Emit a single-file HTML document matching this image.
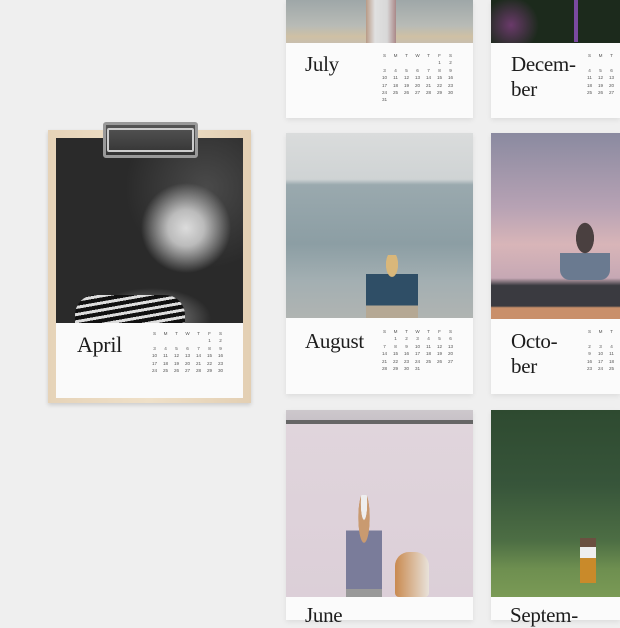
<!DOCTYPE html>
<html><head><style>
*{margin:0;padding:0;box-sizing:border-box}
body{width:620px;height:620px;background:#efefef;position:relative;overflow:hidden;font-family:"Liberation Serif",serif}
.a{position:absolute}
.card{position:absolute;background:#fbfbfb;box-shadow:0 2px 5px rgba(0,0,0,.08)}
.t{position:absolute;font-family:"Liberation Serif",serif;color:#1d1d1d;font-size:21px;line-height:25px;letter-spacing:-.3px}
.g{position:absolute;display:grid;grid-template-columns:repeat(7,11px);grid-auto-rows:7.4px;font-family:"Liberation Sans",sans-serif;font-size:4.6px;color:#555;text-align:center;line-height:7.4px}
</style></head><body>

<!-- clipboard -->
<div class="a" style="left:48px;top:130px;width:203px;height:273px;background:linear-gradient(90deg,#e6d3b8,#efe0c8 50%,#e3cfb3);box-shadow:0 2px 4px rgba(0,0,0,.15)"></div>
<div class="a" style="left:56px;top:138px;width:187px;height:185px;background:radial-gradient(ellipse 45px 45px at 130px 90px,#dcdcdc 0,#bbb 40%,rgba(40,40,40,0) 100%),radial-gradient(ellipse 60px 30px at 95px 180px,#9a9a9a,rgba(0,0,0,0) 100%),radial-gradient(circle at 150px 50px,#4a4a4a,rgba(0,0,0,0) 40%),#2a2a2a"></div>
<div class="a" style="left:75px;top:295px;width:110px;height:28px;background:repeating-linear-gradient(170deg,#111 0 4px,#ddd 4px 7px);border-radius:20px 20px 0 0"></div>
<div class="a" style="left:103px;top:122px;width:95px;height:36px;border:3px solid #999;border-radius:3px;background:linear-gradient(#555,#333)"></div>
<div class="a" style="left:107px;top:128px;width:87px;height:24px;border:2px solid #ccc;border-radius:2px"></div>
<div class="a" style="left:56px;top:323px;width:187px;height:75px;background:#fafafa"></div>
<div class="t" style="left:77px;top:332px;font-size:22px">April</div>
<div class="g" style="left:149px;top:330px"><span>S</span><span>M</span><span>T</span><span>W</span><span>T</span><span>F</span><span>S</span><span></span><span></span><span></span><span></span><span></span><span>1</span><span>2</span><span>3</span><span>4</span><span>5</span><span>6</span><span>7</span><span>8</span><span>9</span><span>10</span><span>11</span><span>12</span><span>13</span><span>14</span><span>15</span><span>16</span><span>17</span><span>18</span><span>19</span><span>20</span><span>21</span><span>22</span><span>23</span><span>24</span><span>25</span><span>26</span><span>27</span><span>28</span><span>29</span><span>30</span></div>

<!-- July -->
<div class="card" style="left:286px;top:0;width:187px;height:118px"></div>
<div class="a" style="left:286px;top:0;width:187px;height:43px;background:linear-gradient(#9ea7a8,#b8bbb6 60%,#cfc0a4 85%,#c9bfae)"></div>
<div class="a" style="left:366px;top:0;width:30px;height:43px;background:linear-gradient(90deg,#b89a86,#e0e0e0 30%,#d8d8d8 70%,#a88)"></div>
<div class="t" style="left:305px;top:52px">July</div>
<div class="g" style="left:379px;top:52px"><span>S</span><span>M</span><span>T</span><span>W</span><span>T</span><span>F</span><span>S</span><span></span><span></span><span></span><span></span><span></span><span>1</span><span>2</span><span>3</span><span>4</span><span>5</span><span>6</span><span>7</span><span>8</span><span>9</span><span>10</span><span>11</span><span>12</span><span>13</span><span>14</span><span>15</span><span>16</span><span>17</span><span>18</span><span>19</span><span>20</span><span>21</span><span>22</span><span>23</span><span>24</span><span>25</span><span>26</span><span>27</span><span>28</span><span>29</span><span>30</span><span>31</span></div>

<!-- December -->
<div class="card" style="left:491px;top:0;width:129px;height:118px"></div>
<div class="a" style="left:491px;top:0;width:129px;height:43px;background:radial-gradient(circle at 20px 25px,#6a3a6a,rgba(0,0,0,0) 25%),#1c2a1c"></div>
<div class="a" style="left:574px;top:0;width:4px;height:42px;background:#7a4aa0"></div>
<div class="t" style="left:511px;top:52px">Decem-<br>ber</div>
<div class="g" style="left:584px;top:52px;grid-template-columns:repeat(3,11px)"><span>S</span><span>M</span><span>T</span><span></span><span></span><span></span><span>4</span><span>5</span><span>6</span><span>11</span><span>12</span><span>13</span><span>18</span><span>19</span><span>20</span><span>25</span><span>26</span><span>27</span></div>

<!-- August -->
<div class="card" style="left:286px;top:133px;width:187px;height:261px"></div>
<div class="a" style="left:286px;top:133px;width:187px;height:185px;background:linear-gradient(#dadcdc,#cfd3d4 25%,#9aa9ae 28%,#8c9ea4 60%,#a3afb2 80%,#b0b4b2)"></div>
<div class="a" style="left:366px;top:255px;width:52px;height:63px;background:radial-gradient(ellipse at 50% 15%,#d9b77a 0,#d9b77a 16%,rgba(0,0,0,0) 17%),linear-gradient(rgba(0,0,0,0) 30%,#2f4e66 30%,#2f4e66 80%,#b5a894 80%);border-radius:10px 10px 0 0"></div>
<div class="t" style="left:305px;top:329px">August</div>
<div class="g" style="left:379px;top:328px"><span>S</span><span>M</span><span>T</span><span>W</span><span>T</span><span>F</span><span>S</span><span></span><span>1</span><span>2</span><span>3</span><span>4</span><span>5</span><span>6</span><span>7</span><span>8</span><span>9</span><span>10</span><span>11</span><span>12</span><span>13</span><span>14</span><span>15</span><span>16</span><span>17</span><span>18</span><span>19</span><span>20</span><span>21</span><span>22</span><span>23</span><span>24</span><span>25</span><span>26</span><span>27</span><span>28</span><span>29</span><span>30</span><span>31</span></div>

<!-- October -->
<div class="card" style="left:491px;top:133px;width:129px;height:261px"></div>
<div class="a" style="left:491px;top:133px;width:129px;height:186px;background:linear-gradient(#8a8aa0,#b7a2b4 40%,#d8b5b8 60%,#c6a8b4 78%,#3a3a40 82%,#3a3a40 93%,#c98f6a 94%)"></div>
<div class="a" style="left:560px;top:220px;width:50px;height:60px;background:radial-gradient(ellipse at 50% 30%,#4a4040 0,#4a4040 25%,rgba(0,0,0,0) 26%),linear-gradient(rgba(0,0,0,0) 55%,#6a7a90 55%);border-radius:10px"></div>
<div class="t" style="left:511px;top:329px">Octo-<br>ber</div>
<div class="g" style="left:584px;top:328px;grid-template-columns:repeat(3,11px)"><span>S</span><span>M</span><span>T</span><span></span><span></span><span></span><span>2</span><span>3</span><span>4</span><span>9</span><span>10</span><span>11</span><span>16</span><span>17</span><span>18</span><span>23</span><span>24</span><span>25</span></div>

<!-- June -->
<div class="card" style="left:286px;top:410px;width:187px;height:210px"></div>
<div class="a" style="left:286px;top:410px;width:187px;height:187px;background:linear-gradient(#cdc8cc,#c8c2c8 10px,#666 10px,#666 14px,#e0d5dc 14px,#dccfd8)"></div>
<div class="a" style="left:346px;top:495px;width:36px;height:102px;background:radial-gradient(ellipse at 50% 8%,#eee 0,#eee 12%,rgba(0,0,0,0) 13%),radial-gradient(ellipse at 50% 22%,#c99a70 0,#c99a70 22%,rgba(0,0,0,0) 23%),linear-gradient(rgba(0,0,0,0) 35%,#7a7c9a 35%,#7a7c9a 92%,#999 92%)"></div>
<div class="a" style="left:395px;top:552px;width:34px;height:45px;background:linear-gradient(90deg,#c98a50,#e8e2da);border-radius:14px 14px 4px 4px"></div>
<div class="t" style="left:305px;top:603px">June</div>

<!-- September -->
<div class="card" style="left:491px;top:410px;width:129px;height:210px"></div>
<div class="a" style="left:491px;top:410px;width:129px;height:187px;background:linear-gradient(#2e4a30,#37553a 40%,#4d6e44 70%,#6e8f50 85%,#7a9a55)"></div>
<div class="a" style="left:580px;top:538px;width:16px;height:45px;background:linear-gradient(#6a5040 0,#6a5040 20%,#eee 20%,#eee 45%,#c98a2a 45%)"></div>
<div class="t" style="left:510px;top:603px">Septem-</div>
</body></html>
